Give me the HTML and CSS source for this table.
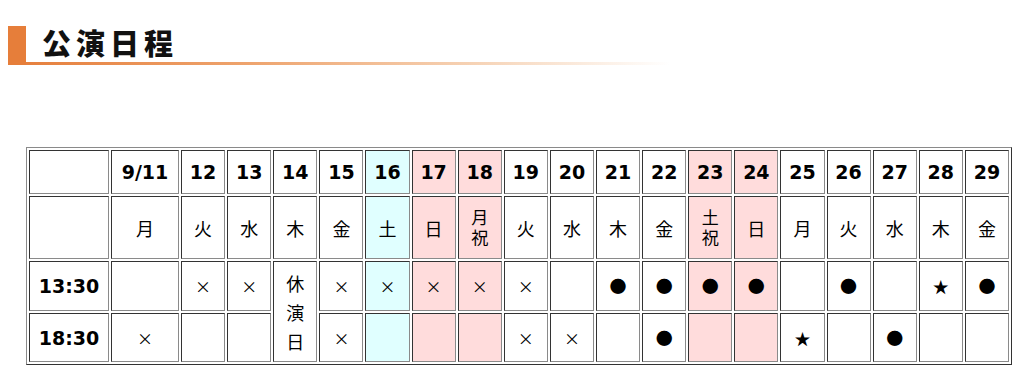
FILE: index.html
```html
<!DOCTYPE html>
<html lang="ja">
<head>
<meta charset="utf-8">
<title>公演日程</title>
<link rel="stylesheet" href="styles.css">
</head>
<body>
<div class="page">
  <h2 class="heading">
    <span class="heading-bar"></span>
    <span class="heading-body"><span class="heading-text">公演日程</span></span>
  </h2>

  <table class="schedule">
    <tr class="row-date">
      <th class="c-label"></th>
      <th class="c-first">9/11</th>
      <th>12</th><th>13</th><th>14</th><th>15</th>
      <th class="sat">16</th>
      <th class="hol">17</th><th class="hol">18</th>
      <th>19</th><th>20</th><th>21</th><th>22</th>
      <th class="hol">23</th><th class="hol">24</th>
      <th>25</th><th>26</th><th>27</th><th>28</th><th>29</th>
    </tr>
    <tr class="row-day">
      <td></td>
      <td>月</td><td>火</td><td>水</td><td>木</td><td>金</td>
      <td class="sat">土</td>
      <td class="hol">日</td>
      <td class="hol two"><span class="ln">月</span><span class="ln">祝</span></td>
      <td>火</td><td>水</td><td>木</td><td>金</td>
      <td class="hol two"><span class="ln">土</span><span class="ln">祝</span></td>
      <td class="hol">日</td>
      <td>月</td><td>火</td><td>水</td><td>木</td><td>金</td>
    </tr>
    <tr class="row-time row-mat">
      <th>13:30</th>
      <td></td>
      <td class="mk">×</td><td class="mk">×</td>
      <td class="closed" rowspan="2">休<br>演<br>日</td>
      <td class="mk">×</td>
      <td class="sat mk">×</td>
      <td class="hol mk">×</td><td class="hol mk">×</td>
      <td class="mk">×</td>
      <td></td>
      <td class="mk dot">●</td><td class="mk dot">●</td>
      <td class="hol mk dot">●</td><td class="hol mk dot">●</td>
      <td></td>
      <td class="mk dot">●</td>
      <td></td>
      <td class="mk star">★</td>
      <td class="mk dot">●</td>
    </tr>
    <tr class="row-time row-eve">
      <th>18:30</th>
      <td class="mk">×</td>
      <td></td><td></td>
      <td class="mk">×</td>
      <td class="sat"></td>
      <td class="hol"></td><td class="hol"></td>
      <td class="mk">×</td><td class="mk">×</td>
      <td></td>
      <td class="mk dot">●</td>
      <td class="hol"></td><td class="hol"></td>
      <td class="mk star">★</td>
      <td></td>
      <td class="mk dot">●</td>
      <td></td><td></td>
    </tr>
  </table>
</div>
</body>
</html>
```

FILE: styles.css
```css
html, body {
  margin: 0;
  padding: 0;
  background: #ffffff;
}

.page {
  padding: 26px 8px 0 8px;
}

.heading {
  display: flex;
  width: 662px;
  height: 39px;
  margin: 0;
  font-weight: normal;
}

.heading-bar {
  width: 18px;
  background: #e67e3a;
}

.heading-body {
  flex: 1;
  padding: 2px 0 0 16px;
  background: linear-gradient(to right, #e6803e 0%, #eea46e 35%, #f6d3b6 70%, rgba(255, 255, 255, 0) 100%) left bottom / 100% 3px no-repeat;
}

.heading-text {
  display: block;
  font-family: "Noto Sans CJK JP", sans-serif;
  font-weight: 900;
  font-size: 29px;
  line-height: 29px;
  letter-spacing: 5px;
  color: #111;
}

.schedule {
  margin: 82px 0 0 18px;
  width: 986px;
  table-layout: fixed;
  border-collapse: separate;
  border-spacing: 2px;
  border: 1px solid;
  border-color: #8a8a8a #333333 #333333 #8a8a8a;
  font-family: "DejaVu Sans", "Noto Sans CJK JP", sans-serif;
  color: #000;
}

.schedule th,
.schedule td {
  box-sizing: border-box;
  padding: 1px;
  border: 1px solid;
  border-color: #333333 #8a8a8a #8a8a8a #333333;
  text-align: center;
  vertical-align: middle;
  background: #ffffff;
}

.schedule th {
  font-weight: 700;
  font-size: 19px;
}

.schedule td {
  font-family: "Noto Sans CJK JP", sans-serif;
  font-size: 18px;
  line-height: 20px;
}

.schedule .c-label {
  width: 80px;
}

.schedule .c-first {
  width: 68px;
}

.row-date th {
  height: 44px;
}

.row-day td {
  height: 63px;
}

.row-mat th,
.row-mat td {
  height: 50px;
}

.row-eve th,
.row-eve td {
  height: 49px;
}

.schedule .two {
  padding-bottom: 3px;
  font-size: 17px;
}

.schedule .ln {
  display: block;
  height: 20px;
  line-height: 20px;
}

.schedule .closed {
  line-height: 29px;
  padding-top: 2px;
}

.schedule .mk {
  font-size: 16px;
}

.schedule .dot {
  font-size: 17px;
}

.schedule .star {
  font-size: 16px;
}

.schedule .sat {
  background: #e0ffff;
}

.schedule .hol {
  background: #ffdcdc;
}
```
